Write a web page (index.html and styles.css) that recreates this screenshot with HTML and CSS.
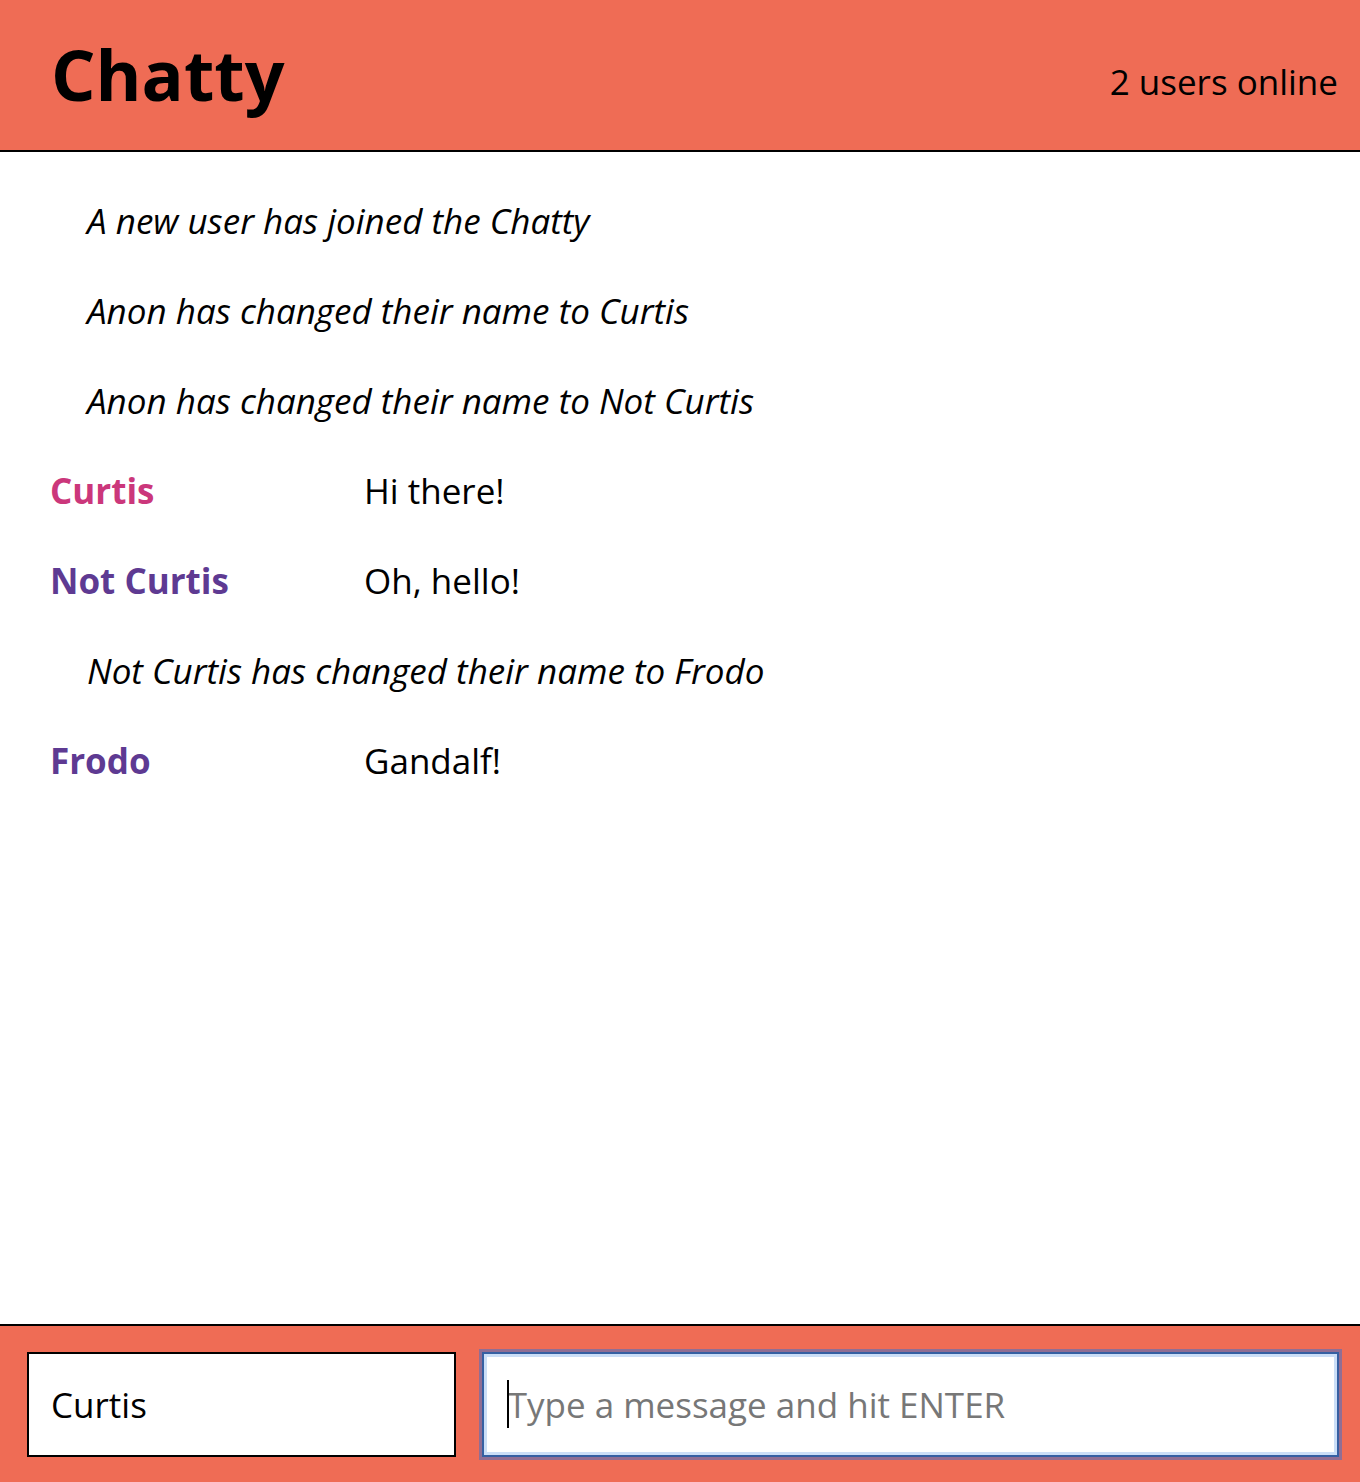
FILE: index.html
```html
<!DOCTYPE html>
<html lang="en">
<head>
<meta charset="utf-8">
<title>Chatty</title>
<link rel="stylesheet" href="styles.css">
</head>
<body>
<div class="app">
  <nav class="navbar">
    <a class="brand" href="#">Chatty</a>
    <span class="online">2 users online</span>
  </nav>
  <main class="messages">
    <div class="message system">A new user has joined the Chatty</div>
    <div class="message system">Anon has changed their name to Curtis</div>
    <div class="message system">Anon has changed their name to Not Curtis</div>
    <div class="message">
      <span class="username pink">Curtis</span>
      <span class="content">Hi there!</span>
    </div>
    <div class="message">
      <span class="username purple">Not Curtis</span>
      <span class="content">Oh, hello!</span>
    </div>
    <div class="message system">Not Curtis has changed their name to Frodo</div>
    <div class="message">
      <span class="username purple">Frodo</span>
      <span class="content">Gandalf!</span>
    </div>
  </main>
  <footer class="chatbar">
    <input class="chatbar-username" type="text" value="Curtis">
    <div class="msg-wrap">
      <input class="chatbar-message" type="text" placeholder="Type a message and hit ENTER">
    </div>
  </footer>
</div>
</body>
</html>
```

FILE: styles.css
```css
* { box-sizing: border-box; }

html, body {
  margin: 0;
  padding: 0;
  height: 100%;
}

body {
  font-family: "Open Sans", "Noto Sans", sans-serif;
  color: #000;
  background: #fff;
}

.app {
  display: flex;
  flex-direction: column;
  height: 100vh;
}

.navbar {
  height: 152px;
  flex: none;
  display: flex;
  align-items: center;
  justify-content: space-between;
  background: #ef6c55;
  border-bottom: 2px solid #000;
  padding: 0 22px 0 51px;
}

.brand {
  font-size: 70px;
  font-weight: 700;
  color: #000;
  text-decoration: none;
  line-height: 1;
  margin-top: -2px;
}

.online {
  font-size: 35px;
  line-height: 1;
  margin-top: 13px;
}

.messages {
  flex: 1;
  padding: 23px 51px 0 50px;
}

.message {
  height: 90px;
  display: flex;
  align-items: center;
  font-size: 35px;
}

.message.system {
  font-style: italic;
  padding-left: 37px;
}

.username {
  width: 314px;
  flex: none;
  font-weight: 700;
}

.pink { color: #cb377b; }
.purple { color: #5e3a92; }

.chatbar {
  flex: none;
  height: 158px;
  display: grid;
  grid-template-columns: minmax(0, 1fr) minmax(0, 2fr);
  column-gap: 26px;
  background: #ef6c55;
  border-top: 2px solid #000;
  padding: 26px 21px 25px 27px;
}

.chatbar input {
  font-family: "Open Sans", "Noto Sans", sans-serif;
  font-size: 35px;
  width: 100%;
  height: 105px;
  margin: 0;
  background: #fff;
  outline: none;
}

.chatbar-username {
  border: 2px solid #000;
  padding: 0 22px;
  color: #000;
}

.msg-wrap {
  position: relative;
  display: flex;
}

.msg-wrap::before {
  content: "";
  position: absolute;
  left: 25px;
  top: 28px;
  width: 2px;
  height: 48px;
  background: #000;
}

.chatbar-message {
  border: 2px solid #3660a3;
  padding: 0 24px;
  box-shadow: 0 0 0 3px rgba(80, 112, 190, 0.6), inset 0 0 0 3px #cbdef7;
  background: linear-gradient(160deg, #fff 70%, #f5f5f5 100%);
  caret-color: transparent;
}

.chatbar-message::placeholder {
  color: #777;
  opacity: 1;
}
```
